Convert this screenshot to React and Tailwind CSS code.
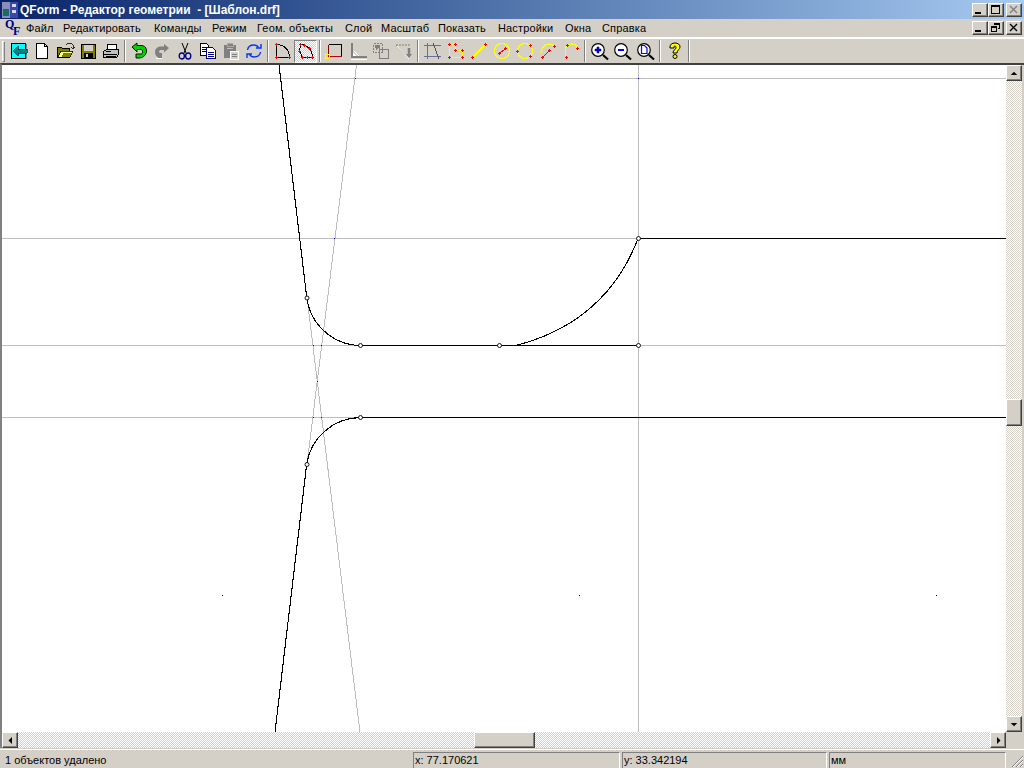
import React from "react";

const out = "border border-t-white border-l-white border-r-[#404040] border-b-[#404040] shadow-[inset_-1px_-1px_0_#808080]";
const dither = "bg-[repeating-conic-gradient(#d4d0c8_0_25%,#ffffff_0_50%)] bg-[length:2px_2px]";
const ui = "font-['Liberation_Sans',sans-serif] text-[11px] leading-none text-black";

const R = ({ x, y }) => <path d={`M${x - 1} ${y}h3v1h-3zM${x} ${y - 1}h1v3h-1z`} fill="#ff0000" />;
const Svg = ({ children }) => (
  <svg width="20" height="20" viewBox="0 0 20 20" fill="none" shapeRendering="crispEdges">{children}</svg>
);
const Smooth = ({ children }) => (
  <svg width="20" height="20" viewBox="0 0 20 20" fill="none">{children}</svg>
);

const icons = {
  exit: () => (
    <Svg>
      <rect x="2.500" y="2.500" width="14" height="15" fill="#00ffff" stroke="#000" />
      <path d="M17 3h1v15h-1z" fill="#808080" />
      <path d="M4 10l5-5v3h9v4H9v3z" fill="#008080" stroke="#000" strokeWidth="0.6" />
    </Svg>
  ),
  doc: () => (
    <Svg>
      <path d="M4.500 2.500h8l3 3v12h-11z" fill="#fff" stroke="#000" />
      <path d="M12.500 2.500v3h3" stroke="#000" />
    </Svg>
  ),
  open: () => (
    <Svg>
      <path d="M2.500 6.500h4l1 1h7v9h-12z" fill="#808000" stroke="#000" />
      <path d="M3 16l3-6h12l-3 6z" fill="#ffff99" stroke="#000" strokeWidth="0.8" />
      <path d="M8 12h8l-1 4H7z" fill="#808000" />
      <path d="M11 4l2-2h3l2 2M18 4v3M16 6l2 2 2-2" stroke="#000" strokeWidth="0.8" />
    </Svg>
  ),
  save: () => (
    <Svg>
      <rect x="3.500" y="3.500" width="14" height="14" fill="#808000" stroke="#000" />
      <rect x="6" y="4" width="9" height="6" fill="#d4d0c8" />
      <rect x="6" y="12" width="9" height="5" fill="#000" />
      <rect x="8" y="13" width="2" height="3" fill="#d4d0c8" />
    </Svg>
  ),
  print: () => (
    <Svg>
      <path d="M7 3.500h8l1 5H6z" fill="#fff" stroke="#000" />
      <path d="M2.500 10.500l3-2h12v5l-2 3h-13z" fill="#c0c0c0" stroke="#000" />
      <path d="M3 13h13M5 15h10" stroke="#000" />
      <rect x="5" y="10" width="5" height="1" fill="#000" />
    </Svg>
  ),
  undo: () => (
    <Smooth>
      <path d="M3 6l5-4v2.500h4c4 0 5.500 2.500 5.500 5.500S15 16.500 11 17H7v-4h5c1.200 0 1.600-1 1.600-2.200S13 8.500 12 8.500H8V11z" fill="#00d000" stroke="#000" strokeWidth="0.9" />
    </Smooth>
  ),
  redo: () => (
    <Smooth>
      <path d="M17 7l-5-4v2.500H9C5 5.500 3 8 3 11s1.500 5 4 6h3v-5H8.500c-1 0-1.400-.6-1.400-1.500S8 9 9 9h3v2.500z" fill="#808080" />
      <path d="M4 17h6v1H4z" fill="#fff" />
    </Smooth>
  ),
  cut: () => (
    <Smooth>
      <path d="M7 2l4 10M13 2l-4 10" stroke="#000" strokeWidth="1" />
      <ellipse cx="6.800" cy="15" rx="2.600" ry="3" stroke="#000080" strokeWidth="1.300" />
      <ellipse cx="13.200" cy="15" rx="2.600" ry="3" stroke="#000080" strokeWidth="1.300" />
    </Smooth>
  ),
  copy: () => (
    <Svg>
      <path d="M2.500 2.500h6l2 2v10h-8z" fill="#fff" stroke="#000" />
      <path d="M4 6h5M4 8h5M4 10h5" stroke="#000" />
      <path d="M8.500 6.500h6l3 3v8h-9z" fill="#fff" stroke="#000080" />
      <path d="M10 11h6M10 13h6M10 15h6" stroke="#000080" />
    </Svg>
  ),
  paste: () => (
    <Svg>
      <path d="M3 4h12v13H3z" fill="#808080" />
      <rect x="6" y="2" width="6" height="3" fill="#808080" stroke="#d4d0c8" strokeWidth="0.5" />
      <rect x="6" y="7" width="6" height="1" fill="#c0c0c0" />
      <path d="M9.500 10.500h8v8h-8z" fill="#d4d0c8" stroke="#fff" />
      <path d="M11 13h5M11 15h5" stroke="#808080" />
    </Svg>
  ),
  refresh: () => (
    <Smooth>
      <path d="M3.500 9C4 5.500 7 4 10 4c2 0 3 .6 4.500 2M12 7h5V3M16.500 11c-.5 3.500-3.500 5-6.500 5-2 0-3-.6-4.500-2M8 13H3v4" stroke="#0033ff" strokeWidth="1.400" />
    </Smooth>
  ),
  d: () => (
    <Svg>
      <path d="M3.500 3.500v13h13C16.500 9 11 3.500 3.500 3.500z" stroke="#000" />
      <R x={3} y={3} /><R x={3} y={16} /><R x={16} y={16} />
    </Svg>
  ),
  dPressed: () => (
    <Svg>
      <path d="M4.500 3.500C11 3.500 16.500 9 16.500 16.500H6.500L3.500 10z" stroke="#000" />
      <R x={4} y={3} /><R x={3} y={10} /><R x={6} y={16} /><R x={11} y={16} /><R x={16} y={16} /><R x={13} y={7} /><R x={8} y={4} />
    </Svg>
  ),
  rect: () => (
    <Svg>
      <path d="M3.500 3.500h13v12" stroke="#000" />
      <path d="M3.500 3.500v11" stroke="#800000" />
      <path d="M3 15.500h14" stroke="#c00000" />
      <rect x="0.500" y="13.500" width="4" height="4" stroke="#ffff00" />
    </Svg>
  ),
  angle: () => (
    <Svg>
      <path d="M3 2h2v13h14v2H3z" fill="#808080" />
      <path d="M5 12l3 3H5z" fill="#fff" />
      <path d="M6 10l5 5" stroke="#fff" />
      <path d="M3 18h16" stroke="#fff" />
    </Svg>
  ),
  move: () => (
    <Svg>
      <rect x="2.500" y="2.500" width="9" height="9" stroke="#808080" strokeDasharray="2 1" />
      <path d="M4 4h5v5l-2-2-2 2z" fill="#808080" />
      <rect x="8.500" y="8.500" width="9" height="9" stroke="#fff" />
      <rect x="8" y="8" width="9" height="9" stroke="#808080" />
    </Svg>
  ),
  scale: () => (
    <Smooth>
      <path d="M2 4h15" stroke="#808080" strokeDasharray="2 1" />
      <path d="M2 4l12 13" stroke="#808080" />
      <path d="M3 5l12 13" stroke="#fff" />
      <path d="M15 7v8" stroke="#808080" strokeWidth="2.500" />
      <path d="M12 13h6l-3 4z" fill="#808080" />
    </Smooth>
  ),
  grid: () => (
    <Svg>
      <path d="M1 4.500h17M1 15.500h17" stroke="#6070a0" />
      <path d="M4.500 2v16" stroke="#6070a0" />
      <path d="M10 2l6 16" stroke="#505060" />
    </Svg>
  ),
  poly: () => (
    <Svg>
      <path d="M3.500 3.500h6v6h7v7h-13z" stroke="#ffff00" strokeWidth="1.500" />
      <R x={3} y={3} /><R x={9} y={3} /><R x={9} y={9} /><R x={16} y={9} /><R x={16} y={16} /><R x={3} y={16} />
    </Svg>
  ),
  line: () => (
    <Svg>
      <path d="M3.500 16.500L16.500 3.500" stroke="#ffff00" strokeWidth="1.500" />
      <R x={3} y={16} /><R x={16} y={3} />
    </Svg>
  ),
  circ1: () => (
    <Svg>
      <circle cx="10" cy="10" r="7.500" stroke="#ffff00" strokeWidth="1.200" />
      <path d="M8 12l5-4" stroke="#ff0000" />
      <R x={7} y={12} /><R x={13} y={7} />
    </Svg>
  ),
  circ3: () => (
    <Svg>
      <circle cx="10" cy="10" r="7.500" stroke="#ffff00" strokeWidth="1.200" />
      <R x={2} y={10} /><R x={15} y={4} /><R x={15} y={15} />
    </Svg>
  ),
  arc1: () => (
    <Svg>
      <path d="M3 12C3 7 7 3 11 3c2 0 4 1 5 2" stroke="#ffff00" strokeWidth="1.200" />
      <path d="M4 17l8-8" stroke="#ff0000" />
      <R x={4} y={16} /><R x={11} y={9} /><R x={16} y={5} />
    </Svg>
  ),
  arc3: () => (
    <Svg>
      <path d="M5 15C3 9 5 3 11 3c3 0 5 2 5 4" stroke="#ffff00" strokeWidth="1.200" />
      <R x={5} y={16} /><R x={6} y={4} /><R x={16} y={7} />
    </Svg>
  ),
  zoomIn: () => <Glass><path d="M5 8h6v2H5zM7 6h2v6H7z" fill="#0000ff" stroke="#000080" strokeWidth="0.5" /></Glass>,
  zoomOut: () => <Glass><path d="M5 8h6v2H5z" fill="#0000ff" /></Glass>,
  zoomAll: () => <Glass><path d="M5.500 4.500h3l2.500 2.500v5.500H5.500z" fill="#fff" stroke="#0000ff" strokeWidth="1.200" /></Glass>,
  help: () => (
    <Smooth>
      <path d="M5 6c0-2.500 2-4 5-4s5 1.500 5 4-3 3-3 6H8c0-3 3-3.500 3-5.500 0-1-.5-1.500-1.200-1.500S9 5.500 9 7H5z" fill="#ffff00" stroke="#000" strokeWidth="1" />
      <circle cx="10" cy="15.500" r="2" fill="#ffff00" stroke="#000" strokeWidth="1" />
    </Smooth>
  ),
};

function Glass({ children }) {
  return (
    <Smooth>
      <circle cx="8" cy="9" r="6.300" fill="#fff" stroke="#000" strokeWidth="1.200" />
      <path d="M13 14l5 4.500" stroke="#000" strokeWidth="2.200" />
      {children}
    </Smooth>
  );
}

const groups = [
  ["exit", "doc", "open", "save", "print"],
  ["undo", "redo", "cut", "copy", "paste", "refresh"],
  ["d", "dPressed"],
  ["rect", "angle", "move", "scale"],
  ["grid", "poly", "line", "circ1", "circ3", "arc1", "arc3"],
  ["zoomIn", "zoomOut", "zoomAll"],
  ["help"],
];

const Sep = ({ w = "w-[6px]" }) => (
  <div className={`${w} h-full flex justify-center items-center shrink-0`}>
    <div className="w-[2px] h-[22px] border-l border-l-[#808080] border-r border-r-white" />
  </div>
);

const Toolbar = () => (
  <div className="h-[25px] flex items-center bg-[#d4d0c8] border-t border-t-white pl-[2px]">
    <div className="w-[3px] h-[21px] border border-t-white border-l-white border-r-[#808080] border-b-[#808080] mr-[2px]" />
    {groups.map((g, i) => (
      <React.Fragment key={i}>
        {g.map((n) => {
          const I = icons[n];
          const pressed = n === "dPressed";
          return (
            <div
              key={n}
              className={`w-[23px] h-[23px] shrink-0 flex items-center justify-center ${pressed ? `${dither} border border-t-[#808080] border-l-[#808080] border-r-white border-b-white` : ""}`}
            >
              <I />
            </div>
          );
        })}
        <Sep w={i === 0 ? "w-[5px]" : "w-[6px]"} />
      </React.Fragment>
    ))}
    <div className="grow h-full" />
  </div>
);

const Arrow = ({ dir }) => {
  const d = { up: "M4 6h7L7.500 2.500z", down: "M4 3h7L7.500 6.500z", left: "M6 1v7L2.500 4.500z", right: "M3 1v7l3.500-3.500z" }[dir];
  const vb = dir === "up" || dir === "down" ? "0 0 15 9" : "0 0 9 9";
  return (
    <svg width={dir === "up" || dir === "down" ? 15 : 9} height="9" viewBox={vb}>
      <path d={d} fill="#000" />
    </svg>
  );
};

const ScrollBtn = ({ dir }) => (
  <div className={`w-4 h-4 shrink-0 bg-[#d4d0c8] flex items-center justify-center ${out}`}>
    <Arrow dir={dir} />
  </div>
);

const WinBtn = ({ children }) => (
  <div className={`w-4 h-[14px] bg-[#d4d0c8] flex items-center justify-center ${out}`}>
    <svg width="12" height="10" viewBox="0 0 12 10" fill="none" shapeRendering="crispEdges">
      {children}
    </svg>
  </div>
);
const IMin = () => <rect x="1" y="7" width="6" height="2" fill="#000" />;
const IMax = () => <path d="M1.500 .5h8v8h-8zM1 1.500h9" stroke="#000" />;
const IRestore = () => <path d="M3.500 .5h6v5h-2M4 1.500h5M1.500 3.500h5v5h-5zM2 4.500h4" stroke="#000" />;
const IClose = ({ c = "#000" }) => <path d="M2 1l2 2 2 2 2 2 1 1M9 1L7 3 5 5 3 7 2 8" stroke={c} strokeWidth="1.400" shapeRendering="auto" />;

const menu = [
  ["Файл", "w-[37px]"],
  ["Редактировать", "w-[91px]"],
  ["Команды", "w-[58px]"],
  ["Режим", "w-[45px]"],
  ["Геом. объекты", "w-[88px]"],
  ["Слой", "w-[36px]"],
  ["Масштаб", "w-[57px]"],
  ["Показать", "w-[60px]"],
  ["Настройки", "w-[67px]"],
  ["Окна", "w-[37px]"],
  ["Справка", "w-[50px]"],
];

const G = "#bdbdbd";
const Canvas = () => (
  <svg className="block w-full h-full" viewBox="2 65 1004 667" fill="none" shapeRendering="crispEdges">
    {[78, 238, 345, 417].map((y) => (
      <path key={y} d={`M2 ${y + 0.5}H1006`} stroke={G} />
    ))}
    <path d="M638.500 65V732" stroke={G} />
    <path d="M356.500 65L307 464" stroke={G} />
    <path d="M307 297L360 732" stroke={G} />
    {[[355, 78], [638, 78], [334, 238], [638, 238], [321, 345], [313, 345], [313, 417], [321, 417], [317, 381]].map(([x, y]) => (
      <rect key={`${x}-${y}`} x={x} y={y} width="1" height="1" fill="#0000c0" />
    ))}
    {[[222, 595], [579, 595], [936, 595]].map(([x, y]) => (
      <rect key={x} x={x} y={y} width="1" height="1" fill="#000" />
    ))}
    <g stroke="#000" strokeWidth="1.100">
      <path d="M279 65L306.700 297A55 55 0 0 0 360 345.500" />
      <path d="M275 732L306.700 464A55 55 0 0 1 360 417.500" />
      <path d="M516 345.500Q606 322 638 238.500" />
    </g>
    <path d="M360 345.500H638M360 417.500H1006M638 238.500H1006" stroke="#000" />
    {[[306.5, 297.5], [360, 345], [499, 345], [638, 345], [638, 238], [360, 417], [306.5, 464]].map(([x, y]) => (
      <circle key={`${x}-${y}`} cx={x + 0.5} cy={y + 0.5} r="2" fill="#fff" stroke="#000" strokeWidth="0.900" shapeRendering="auto" />
    ))}
  </svg>
);

export default function App() {
  return (
    <div className={`w-[1024px] h-[768px] flex flex-col overflow-hidden bg-[#d4d0c8] ${ui}`}>
      {/* title bar */}
      <div className="h-[19px] shrink-0 flex items-center bg-gradient-to-r from-[#0a246a] to-[#a6caf0] pl-[2px] pr-[2px]">
        <svg width="16" height="16" viewBox="0 0 16 16" className="shrink-0" shapeRendering="crispEdges">
          <rect width="16" height="16" fill="#8a8fb8" />
          <path d="M8 0h8v16H8z" fill="#3848a8" />
          <path d="M1 7h6v7H1z" fill="#1a6a6a" />
          <path d="M10 2h4v3h-4zM10 8h4v3h-4z" fill="#d8d8f0" />
        </svg>
        <span className="ml-[2px] font-bold text-[12px] text-white whitespace-pre">QForm - Редактор геометрии  - [Шаблон.drf]</span>
        <div className="ml-auto flex">
          <WinBtn><IMin /></WinBtn>
          <WinBtn><IMax /></WinBtn>
          <div className="ml-[2px]"><WinBtn><IClose c="#808080" /></WinBtn></div>
        </div>
      </div>
      {/* menu bar */}
      <div className="h-[19px] shrink-0 flex items-center border-b border-b-[#ffffff] pl-[5px] pr-[2px] bg-[#d4d0c8]">
        <div className="w-[21px] shrink-0 h-4 flex font-['Liberation_Serif',serif] font-bold text-[#000080]">
          <span className="text-[12px] leading-[9px] h-[9px] w-[8px] self-start">Q</span>
          <span className="text-[12px] leading-[9px] h-[9px] w-[7px] self-end">F</span>
        </div>
        {menu.map(([t, w]) => (
          <span key={t} className={`${w} shrink-0 whitespace-nowrap tracking-[0.15px]`}>{t}</span>
        ))}
        <div className="ml-auto flex">
          <WinBtn><IMin /></WinBtn>
          <WinBtn><IRestore /></WinBtn>
          <div className="ml-[2px]"><WinBtn><IClose /></WinBtn></div>
        </div>
      </div>
      <Toolbar />
      {/* work area */}
      <div className="h-[685px] shrink-0 flex flex-col border-t-2 border-t-[#404040] border-l-2 border-l-[#808080] pr-[2px]">
        <div className="h-[667px] shrink-0 flex">
          <div className="w-[1004px] shrink-0 h-full bg-white"><Canvas /></div>
          <div className={`w-4 shrink-0 flex flex-col ${dither}`}>
            <ScrollBtn dir="up" />
            <div className="h-[318px] shrink-0" />
            <div className={`w-4 h-[27px] shrink-0 bg-[#d4d0c8] ${out}`} />
            <div className="grow" />
            <ScrollBtn dir="down" />
          </div>
        </div>
        <div className="h-4 shrink-0 flex">
          <div className={`w-[1004px] shrink-0 flex ${dither}`}>
            <ScrollBtn dir="left" />
            <div className="w-[456px] shrink-0" />
            <div className={`w-[61px] h-4 shrink-0 bg-[#d4d0c8] ${out}`} />
            <div className="grow" />
            <ScrollBtn dir="right" />
          </div>
          <div className="w-4 shrink-0 bg-[#d4d0c8]" />
        </div>
      </div>
      {/* status bar */}
      <div className="grow flex items-stretch mt-[1px] border-t border-t-white pt-[2px] bg-[#d4d0c8]">
        <div className="w-[413px] shrink-0 pl-[5px] flex items-center">1 объектов удалено</div>
        <div className="w-[207px] shrink-0 border-t border-l border-t-[#808080] border-l-[#808080] border-r border-r-white pl-[1px] flex items-center">x: 77.170621</div>
        <div className="w-[2px] shrink-0" />
        <div className="w-[205px] shrink-0 border-t border-l border-t-[#808080] border-l-[#808080] border-r border-r-white pl-[1px] flex items-center">y: 33.342194</div>
        <div className="w-[2px] shrink-0" />
        <div className="w-[177px] shrink-0 border-t border-l border-t-[#808080] border-l-[#808080] border-r border-r-white pl-[1px] flex items-center">мм</div>
        <div className="grow flex items-end justify-end">
          <svg width="14" height="14" viewBox="0 0 14 14" fill="none">
            <path d="M13 2L2 13M13 6L6 13M13 10l-3 3" stroke="#808080" />
            <path d="M13 3L3 13M13 7L7 13M13 11l-2 2" stroke="#fff" />
          </svg>
        </div>
      </div>
    </div>
  );
}
